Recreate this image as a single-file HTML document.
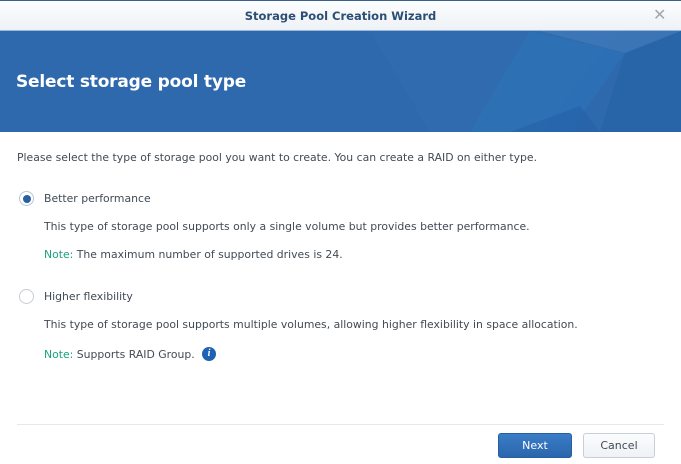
<!DOCTYPE html>
<html><head><style>
body{margin:0;width:681px;height:464px;overflow:hidden;background:#fff;font-family:"DejaVu Sans","Liberation Sans",sans-serif;font-size:10.85px;color:#414b55;position:relative}
.t{position:absolute;white-space:nowrap}
.top{position:absolute;left:0;top:0;width:681px;height:30px;background:linear-gradient(#fcfdfe,#eef2f6);border-top:1px solid #3a5f8a;box-sizing:border-box}
.ban{position:absolute;left:0;top:30px;width:681px;height:101px;background:#2e69ad;overflow:hidden;border-top:1px solid #9bb8d8}
.radio{position:absolute;width:15px;height:15px;border-radius:50%;border:1px solid #c8ccd0;box-sizing:border-box;background:#fff}
.g{color:#1ba27c}
.btn{position:absolute;top:433px;height:25px;border-radius:3px;box-sizing:border-box;text-align:center;line-height:23px;font-size:11px}
</style></head><body>
<div class="top"><div class="t" style="left:0;width:681px;text-align:center;top:8px;font-weight:bold;font-size:11.5px;color:#2d4e74">Storage Pool Creation Wizard</div>
<div class="t" style="left:653px;top:4px;font-size:16px;color:#a0a8b0">✕</div></div>
<div class="ban">
<svg width="681" height="101" style="position:absolute;left:0;top:0">
<polygon points="370,0 620,0 540,101 430,101" fill="#3172b4" opacity=".3"/>
<polygon points="530,0 625,22 570,101 470,101" fill="#2b78bf" opacity=".4"/>
<polygon points="625,22 681,0 681,101 600,101" fill="#1f5fa3" opacity=".5"/>
<polygon points="540,0 625,22 681,0" fill="#4f88c3" opacity=".4"/>
<polygon points="510,101 580,75 600,101" fill="#2461a6" opacity=".6"/>
</svg>
<div class="t" style="left:16px;top:41px;font-weight:bold;font-size:17px;color:#fff;letter-spacing:-0.2px">Select storage pool type</div></div>
<div class="t" style="left:17px;top:151px">Please select the type of storage pool you want to create. You can create a RAID on either type.</div>
<div class="radio" style="left:19px;top:191px;border-color:#b5c6da"><div style="position:absolute;left:2.5px;top:2.5px;width:8px;height:8px;border-radius:50%;background:#2a5fa0"></div></div>
<div class="t" style="left:44px;top:192px">Better performance</div>
<div class="t" style="left:44px;top:220px">This type of storage pool supports only a single volume but provides better performance.</div>
<div class="t" style="left:44px;top:248px"><span class="g">Note:</span> The maximum number of supported drives is 24.</div>
<div class="radio" style="left:19px;top:289px"></div>
<div class="t" style="left:44px;top:290px">Higher flexibility</div>
<div class="t" style="left:44px;top:318px">This type of storage pool supports multiple volumes, allowing higher flexibility in space allocation.</div>
<div class="t" style="left:44px;top:348px"><span class="g">Note:</span> Supports RAID Group.</div>
<div style="position:absolute;left:202px;top:347px;width:14px;height:14px;border-radius:50%;background:#1d62b3;color:#fff;font-size:10px;font-style:italic;font-weight:bold;text-align:center;line-height:14px;font-family:'Liberation Serif',serif">i</div>
<div style="position:absolute;left:17px;top:424px;width:647px;height:1px;background:#e6e9ec"></div>
<div class="btn" style="left:498px;width:74px;background:linear-gradient(#3a7dc6,#2a66ad);border:1px solid #275e9e;color:#fff">Next</div>
<div class="btn" style="left:583px;width:72px;background:linear-gradient(#fbfcfd,#eef2f6);border:1px solid #c7ced6;color:#414b55">Cancel</div>
</body></html>
